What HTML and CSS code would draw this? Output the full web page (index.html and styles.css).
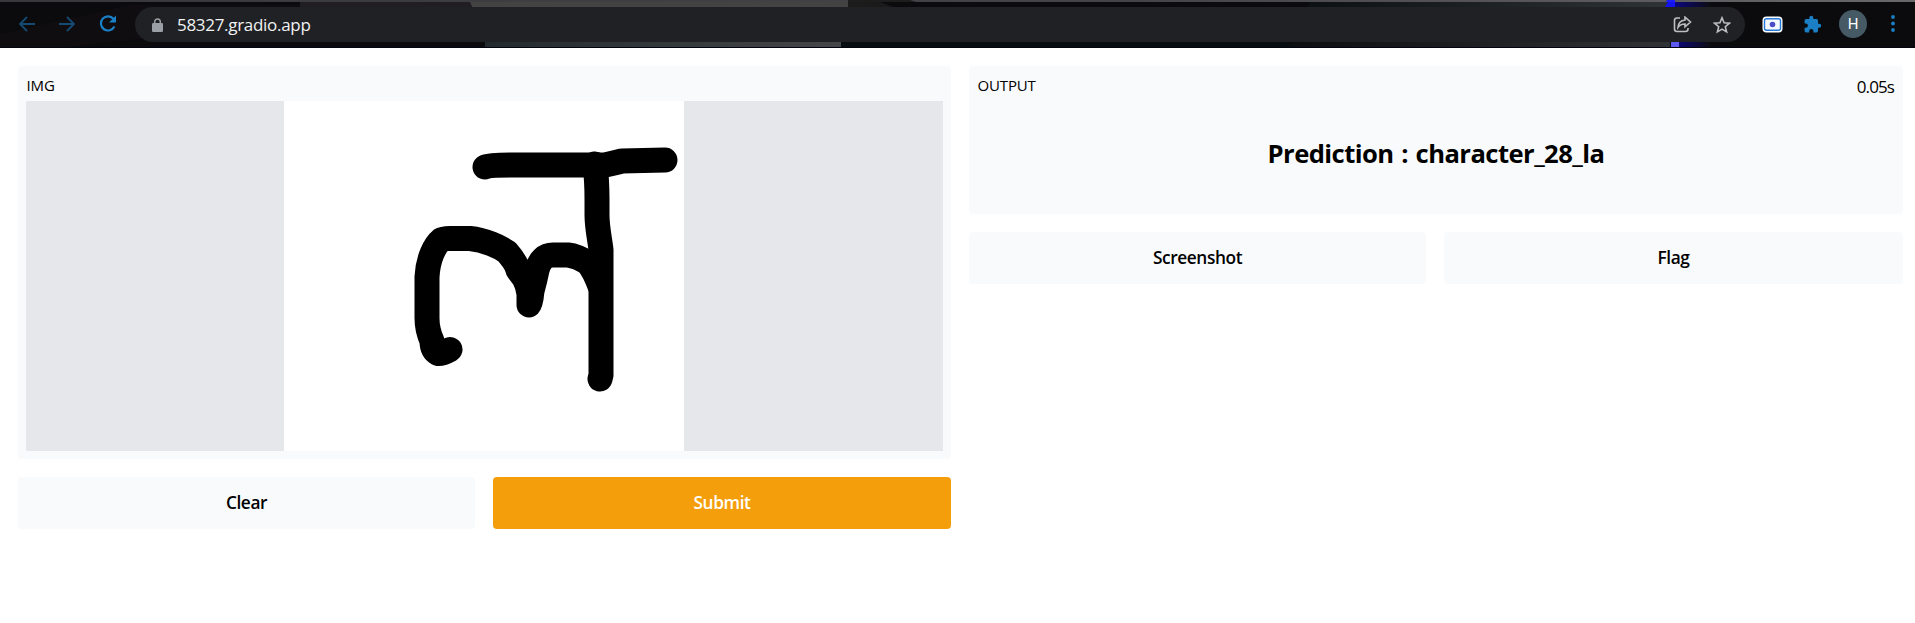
FILE: index.html
```html
<!DOCTYPE html>
<html lang="en">
<head>
<meta charset="utf-8">
<title>58327.gradio.app</title>
<link rel="stylesheet" href="styles.css">
</head>
<body>
<header class="toolbar">
  <svg class="backdrop" viewBox="0 0 1915 48" width="1915" height="48">
    <defs>
      <linearGradient id="low" x1="0" x2="1"><stop offset="0" stop-color="#232a2e"/><stop offset="1" stop-color="#444749"/></linearGradient>
      <linearGradient id="mid" x1="0" x2="1"><stop offset="0" stop-color="#1d1c1d"/><stop offset="1" stop-color="#020204"/></linearGradient>
      <linearGradient id="far" x1="0" x2="1"><stop offset="0" stop-color="#0c0f12"/><stop offset="1" stop-color="#303335"/></linearGradient>
      <linearGradient id="blue" x1="0" x2="1"><stop offset="0" stop-color="#0b0780"/><stop offset="1" stop-color="#0d0c12"/></linearGradient>
      <linearGradient id="rim" x1="0" x2="1"><stop offset="0" stop-color="#38383c"/><stop offset=".6" stop-color="#454548"/><stop offset="1" stop-color="#68686a"/></linearGradient>
    </defs>
    <rect width="1915" height="48" fill="#0b0a0d"/>
    <path d="M0 34L130 5H300V20L60 48H0z" fill="#100d11"/>
    <path d="M300 2H475V7H300z" fill="#201e20"/>
    <path d="M470 2H848V24H480z" fill="#434343"/>
    <path d="M485 24H841V47H485z" fill="url(#low)"/>
    <path d="M848 2H880L893 7H1310V24H848z" fill="url(#mid)"/>
    <path d="M841 42H1290V47H841z" fill="#070d11"/>
    <path d="M1310 2H1670V47H1290z" fill="url(#far)"/>
    <path d="M1675 2H1710V47H1675z" fill="url(#blue)"/>
    <path d="M1668 2H1675V7H1665z" fill="#1414ef"/>
    <path d="M1671 42H1679V47H1671z" fill="#5b58ee"/>
    <rect width="1915" height="2" fill="url(#rim)"/>
    <path d="M848 0H910L916 2H848z" fill="#1d1d1d"/>
    <path d="M1667 0H1675V2H1666z" fill="#1c1cff"/>
    <rect y="47" width="1915" height="1" fill="#02050f"/>
  </svg>
  <nav class="nav">
    <svg class="dim" width="16" height="16" viewBox="0 0 16 16"><path d="M16 8H1M8 1L1 8l7 7"/></svg>
    <svg class="dim" width="16" height="16" viewBox="0 0 16 16"><path d="M0 8h15M8 1l7 7-7 7"/></svg>
    <svg class="reload" width="18" height="18" viewBox="0 0 18 18"><path d="M14.6 4A7.1 7.1 0 1 0 15.4 11.5"/><path class="tip" d="M17 .6V7.600H10z"/></svg>
  </nav>
  <div class="address">
    <svg class="lock" width="12" height="14" viewBox="0 0 12 14"><rect y="5" width="11" height="9" rx="1.200" fill="#9aa0a6"/><path d="M2.700 6V3.800a2.800 2.900 0 0 1 5.600 0V6" fill="none" stroke="#9aa0a6" stroke-width="1.500"/></svg>
    <span class="url">58327.gradio.app</span>
    <svg class="share" width="19" height="18" viewBox="0 0 19 18"><path d="M7 2H4Q1.500 2 1.500 4.500V13Q1.500 15.500 4 15.500H12.500Q15 15.500 15 13V12"/><path d="M12 1.200L17.500 6 12 10.800V8C8.500 8 6.500 9 5 11.300 5.300 7 8 4.500 12 4z"/></svg>
    <svg class="star" width="18" height="18" viewBox="0 0 18 18"><path d="M9 1.800l2.100 5 5.300.4-4.100 3.500 1.300 5.200L9 13.100l-4.600 2.800 1.300-5.200L1.600 7.200l5.300-.4z"/></svg>
  </div>
  <div class="extensions">
    <svg width="21" height="17" viewBox="0 0 21 17"><rect x=".5" y=".5" width="20" height="16" rx="4" fill="#fff"/><rect x="2.500" y="2.800" width="16" height="11.400" rx="2" fill="#f4f8ff" stroke="#2879d8" stroke-width="1.400"/><circle cx="10.500" cy="8.500" r="2.800" fill="#4b4ac8"/></svg>
    <svg class="puzzle" width="19" height="19" viewBox="0 0 24 24"><path d="M20.500 11H19V7a2 2 0 0 0-2-2h-4V3.500a2.500 2.500 0 0 0-5 0V5H4a2 2 0 0 0-2 2v3.800h1.500a2.700 2.700 0 0 1 0 5.400H2V20a2 2 0 0 0 2 2h3.800v-1.500a2.700 2.700 0 0 1 5.400 0V22H17a2 2 0 0 0 2-2v-4h1.500a2.500 2.500 0 0 0 0-5z"/></svg>
    <span class="avatar">H</span>
    <svg width="4" height="18" viewBox="0 0 4 18" fill="#1a7fc4"><circle cx="2" cy="2" r="1.900"/><circle cx="2" cy="8.500" r="1.900"/><circle cx="2" cy="15" r="1.900"/></svg>
  </div>
</header>
<main class="interface">
  <section class="column">
    <div class="panel input-panel">
      <div class="label">IMG</div>
      <div class="stage">
        <svg class="sketch" viewBox="284 101 400 350" width="400" height="350">
          <g fill="none" stroke="#000" stroke-width="25" stroke-linecap="round" stroke-linejoin="round">
            <path d="M485 167Q490 165 510 165H605Q614 163 622 161L665 160"/>
            <path d="M595 164Q597 180 597 200V215C597 228 600 240 601 250V375L600 379"/>
            <path d="M450 349.500Q442 354 438 353.500Q432 350 432 341Q427 330 427 318V277C428 258 435 245 441 240Q444 238 453 238.500H470C485 240 500 247 507 252C513 259 517 265 518 270L524 278Q528 285 529 294V305Q531 303 532 291Q535 280 537 270Q541 255 553 255H568Q577 256 588 263Q594 270 600 286"/>
          </g>
        </svg>
      </div>
    </div>
    <div class="actions"><button class="button clear">Clear</button><button class="button submit">Submit</button></div>
  </section>
  <section class="column">
    <div class="panel output-panel">
      <div class="output-head"><span class="label output-label">OUTPUT</span><span class="time">0.05s</span></div>
      <h1 class="prediction">Prediction : character_28_la</h1>
    </div>
    <div class="actions"><button class="button shot">Screenshot</button><button class="button flag">Flag</button></div>
  </section>
</main>
</body>
</html>
```

FILE: styles.css
```css
* { box-sizing: border-box; }
body { margin: 0; background: #fff; color: #000; font-family: "Open Sans", "Noto Sans", sans-serif; overflow: hidden; height: 623px; }
svg { display: block; flex: none; }
.toolbar { position: relative; height: 48px; display: flex; align-items: flex-start; }
.backdrop { position: absolute; left: 0; top: 0; z-index: -1; }
.nav { display: flex; align-items: center; width: 135px; height: 48px; padding-left: 19px; gap: 24px; }
.dim { fill: none; stroke: #154a72; stroke-width: 1.8; }
.reload { fill: none; stroke: #1a7fc4; stroke-width: 2.2; }
.tip { fill: #1a7fc4; stroke: none; }
.address { width: 1610px; height: 35px; margin-top: 7px; border-radius: 18px; background: #202124; display: flex; align-items: center; padding: 0 14px 0 17px; }
.url { color: #f1f2f3; font-size: 17px; line-height: 24px; margin-left: 13px; letter-spacing: -.3px; flex: 1; }
.share, .star { fill: none; stroke: #bcbec1; stroke-width: 1.6; }
.share { margin-right: 21px; }
.extensions { display: flex; align-items: center; height: 48px; padding-left: 17px; }
.puzzle { fill: #1a7fc4; margin: 0 17px 0 20px; }
.avatar { width: 28px; height: 28px; border-radius: 50%; background: #455a64; color: #fff; font: 15px/28px Roboto, sans-serif; text-align: center; margin-right: 24px; }
.interface { display: grid; grid-template-columns: 933px 934px; gap: 18px; padding: 18px; }
.column { display: flex; flex-direction: column; gap: 18px; }
.panel { background: #f9fafb; border-radius: 4px; }
.input-panel { height: 393px; padding: 8px; }
.label { font-size: 15px; line-height: 22px; letter-spacing: -.15px; padding-left: .5px; }
.stage { margin-top: 5px; height: 350px; background: #e5e7eb; padding-left: 258px; }
.sketch { background: #fff; }
.output-panel { height: 148px; padding: 8px; }
.output-head { display: flex; justify-content: space-between; align-items: flex-start; height: 30px; }
.time { font-size: 17px; line-height: 26px; letter-spacing: -.9px; padding-right: 1px; }
.prediction { margin: 32px 0 0; text-align: center; font-size: 25.6px; line-height: 36px; font-weight: 700; letter-spacing: -.55px; word-spacing: 1.5px; }
.actions { display: grid; grid-template-columns: 457px 1fr; gap: 18px; }
.button { height: 52px; border: 0; border-radius: 4px; background: #f9fafb; font: 600 17.300px/26px "Open Sans", sans-serif; color: #000; padding: 0; letter-spacing: -.4px; }
.submit { background: #f59e0b; color: #fff; }
```
